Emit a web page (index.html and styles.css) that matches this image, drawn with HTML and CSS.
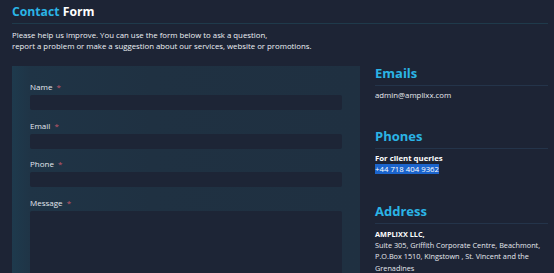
FILE: index.html
```html
<!DOCTYPE html>
<html lang="en">
<head>
    <meta charset="UTF-8">
    <meta name="viewport" content="width=device-width, initial-scale=1.0">
    <title>Contact Form</title>
    <link rel="stylesheet" href="styles.css">
</head>
<body>
    <div class="page">
        <div class="title">
            <h1><span class="accent">Contact</span> Form</h1>
        </div>

        <p class="intro">Please help us improve. You can use the form below to ask a question,<br>
        report a problem or make a suggestion about our services, website or promotions.</p>

        <div class="content">
            <form class="form-panel">
                <div class="field">
                    <label>Name <span class="req">*</span></label>
                    <input type="text">
                </div>
                <div class="field">
                    <label>Email <span class="req">*</span></label>
                    <input type="text">
                </div>
                <div class="field">
                    <label>Phone <span class="req">*</span></label>
                    <input type="text">
                </div>
                <div class="field">
                    <label>Message <span class="req">*</span></label>
                    <textarea></textarea>
                </div>
            </form>

            <div class="info">
                <div class="info-block">
                    <h2>Emails</h2>
                    <p>admin@amplixx.com</p>
                </div>
                <div class="info-block">
                    <h2>Phones</h2>
                    <p><strong>For client queries</strong><br>
                    <span class="selected">+44 718 404 9362</span></p>
                </div>
                <div class="info-block">
                    <h2>Address</h2>
                    <p class="address"><strong>AMPLIXX LLC,</strong><br>
                    Suite 305, Griffith Corporate Centre, Beachmont,<br>
                    P.O.Box 1510, Kingstown , St. Vincent and the<br>
                    Grenadines</p>
                </div>
            </div>
        </div>
    </div>
</body>
</html>
```

FILE: styles.css
```css
* {
    margin: 0;
    padding: 0;
    box-sizing: border-box;
    font-family: "Open Sans", Arial, sans-serif;
}

body {
    background-color: #1d2435;
    color: #e6e9ef;
    overflow: hidden;
}

.page {
    padding: 4px 6px 0 12px;
}

.title {
    border-bottom: 1px solid #1f3a4b;
    padding-bottom: 3px;
}

.title h1 {
    font-size: 12.2px;
    font-weight: 700;
    color: #fff;
    line-height: 16px;
}

.accent {
    color: #2bb4e6;
}

.intro {
    font-size: 7.8px;
    line-height: 11px;
    margin-top: 6px;
    color: #eef1f5;
}

.content {
    display: grid;
    grid-template-columns: 348px 1fr;
    gap: 15px;
    margin-top: 14px;
}

.form-panel {
    background: linear-gradient(90deg, #1e3a4d 0, #1f3446 18px, #1f3142 40%, #1f3041 100%);
    padding: 16px 18px 0 18px;
    height: 220px;
}

.field {
    margin-bottom: 10.5px;
}

.field label {
    display: block;
    font-size: 8px;
    line-height: 10px;
    color: #e4e8ee;
    margin-bottom: 3px;
}

.req {
    color: #c0576a;
    margin-left: 2px;
}

.field input,
.field textarea {
    display: block;
    width: 100%;
    height: 15px;
    background: #1d2536;
    border: none;
    border-radius: 2px;
    outline: none;
}

.field textarea {
    height: 80px;
    resize: none;
}

.info {
    margin-top: -1px;
}

.info-block {
    margin-bottom: 27px;
}

.info-block h2 {
    font-size: 13px;
    font-weight: 700;
    color: #2bb4e6;
    line-height: 16px;
    padding-bottom: 4px;
    border-bottom: 1px solid #24344a;
    margin-bottom: 4px;
}

.info-block p {
    font-size: 7.8px;
    line-height: 11.2px;
    color: #e6e9ef;
}

.info-block p.address {
    font-size: 7.3px;
    line-height: 11.4px;
    white-space: nowrap;
    margin-top: 5px;
}

.info-block strong {
    font-weight: 700;
    color: #fff;
}

.selected {
    background: #1b64cc;
    color: #fff;
}
```
